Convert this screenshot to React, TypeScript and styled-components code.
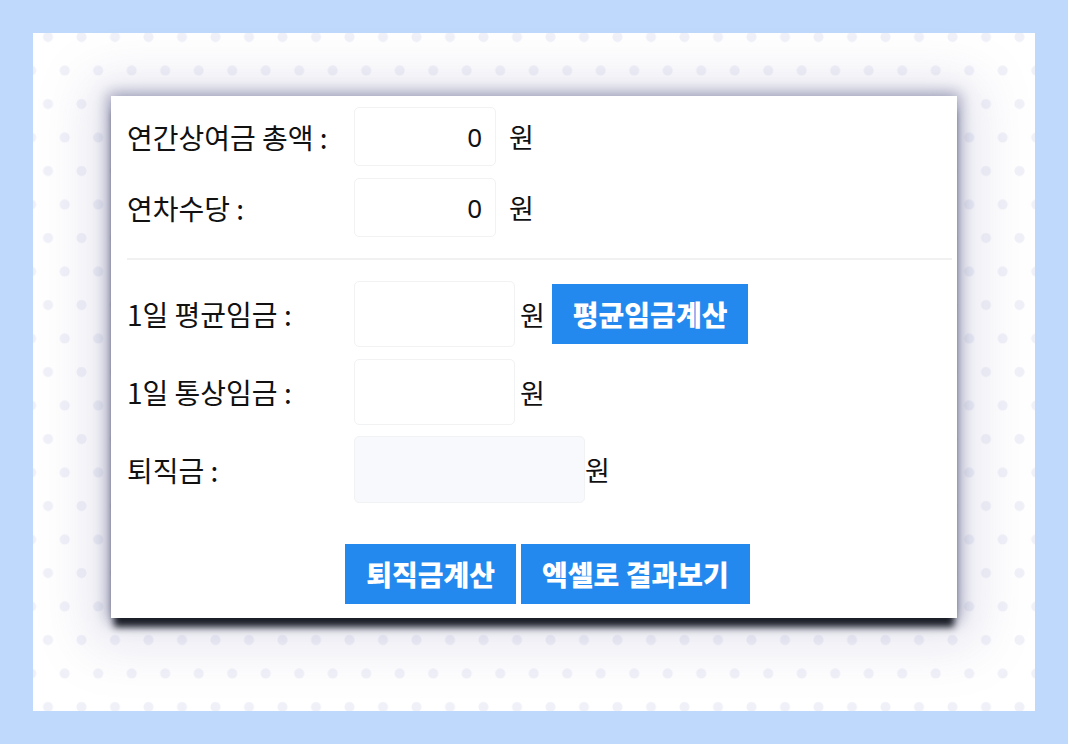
import styled, { createGlobalStyle } from 'styled-components';

const GlobalStyle = createGlobalStyle`
  html, body {
    margin: 0;
    padding: 0;
    background: #bfd9fc;
  }
  body {
    font-family: "Noto Sans CJK KR", "Noto Sans", sans-serif;
    color: #111;
  }
`;

const Frame = styled.div`
  width: 1068px;
  height: 744px;
  box-sizing: border-box;
  padding: 33px;
  background: #bfd9fc;
`;

const Panel = styled.div`
  height: 100%;
  box-sizing: border-box;
  padding: 63px 78px 0;
  background-color: #fff;
  background-image:
    radial-gradient(circle at 8.4px 16.75px, #f0f1f8 4.6px, transparent 5.4px),
    radial-gradient(circle at 25.1px 50.25px, #f0f1f8 4.6px, transparent 5.4px);
  background-size: 33.5px 67px;
  background-position: 6.6px -12.75px;
`;

const Card = styled.div`
  background: #fff;
  padding: 11px 5px 14px 16px;
  box-shadow:
    0 12px 7px -3px rgba(18, 22, 30, 0.95),
    0 0 14px 3px rgba(70, 72, 120, 0.5),
    0 6px 50px 22px rgba(120, 122, 175, 0.18);
`;

const Row = styled.div<{ $h: number; $gap?: number }>`
  display: flex;
  align-items: center;
  height: ${(p) => p.$h}px;
  margin-top: ${(p) => p.$gap ?? 0}px;
`;

const Label = styled.div`
  width: 227px;
  flex-shrink: 0;
  font-size: 28px;
  line-height: 1;
  white-space: nowrap;
`;

const Field = styled.input<{ $w: number; $disabled?: boolean }>`
  box-sizing: border-box;
  width: ${(p) => p.$w}px;
  height: 100%;
  border: 1px solid #f1f2f4;
  border-radius: 5px;
  background: ${(p) => (p.$disabled ? '#f8f9fd' : '#fff')};
  padding: 0 13px 0 8px;
  text-align: right;
  font-family: "Noto Sans", "Noto Sans CJK KR", sans-serif;
  font-size: 26px;
  color: #111;
  outline: none;
`;

const Unit = styled.span<{ $ml: number }>`
  margin-left: ${(p) => p.$ml}px;
  font-size: 27px;
  line-height: 1;
`;

const Divider = styled.div`
  height: 2px;
  background: #f1f1f2;
  margin: 21px 0 21px;
`;

const Button = styled.button`
  height: 60px;
  padding: 0 21px;
  border: none;
  border-radius: 0;
  background: #2489ee;
  color: #fff;
  font-family: "Noto Sans CJK KR", sans-serif;
  font-size: 28px;
  font-weight: 900;
  white-space: nowrap;
  cursor: pointer;
`;

const InlineButton = styled(Button)`
  margin-left: 7px;
`;

const Actions = styled.div`
  display: flex;
  justify-content: center;
  gap: 5px;
  margin-top: 41px;
  padding-left: 16px;
`;

export default function App() {
  return (
    <>
      <GlobalStyle />
      <Frame>
        <Panel>
          <Card>
            <Row $h={59}>
              <Label>연간상여금 총액 :</Label>
              <Field $w={142} defaultValue="0" />
              <Unit $ml={13}>원</Unit>
            </Row>
            <Row $h={59} $gap={12}>
              <Label>연차수당 :</Label>
              <Field $w={142} defaultValue="0" />
              <Unit $ml={13}>원</Unit>
            </Row>
            <Divider />
            <Row $h={66}>
              <Label>1일 평균임금 :</Label>
              <Field $w={161} />
              <Unit $ml={5}>원</Unit>
              <InlineButton>평균임금계산</InlineButton>
            </Row>
            <Row $h={66} $gap={12}>
              <Label>1일 통상임금 :</Label>
              <Field $w={161} />
              <Unit $ml={5}>원</Unit>
            </Row>
            <Row $h={67} $gap={11}>
              <Label>퇴직금 :</Label>
              <Field $w={231} $disabled readOnly />
              <Unit $ml={0}>원</Unit>
            </Row>
            <Actions>
              <Button>퇴직금계산</Button>
              <Button>엑셀로 결과보기</Button>
            </Actions>
          </Card>
        </Panel>
      </Frame>
    </>
  );
}
